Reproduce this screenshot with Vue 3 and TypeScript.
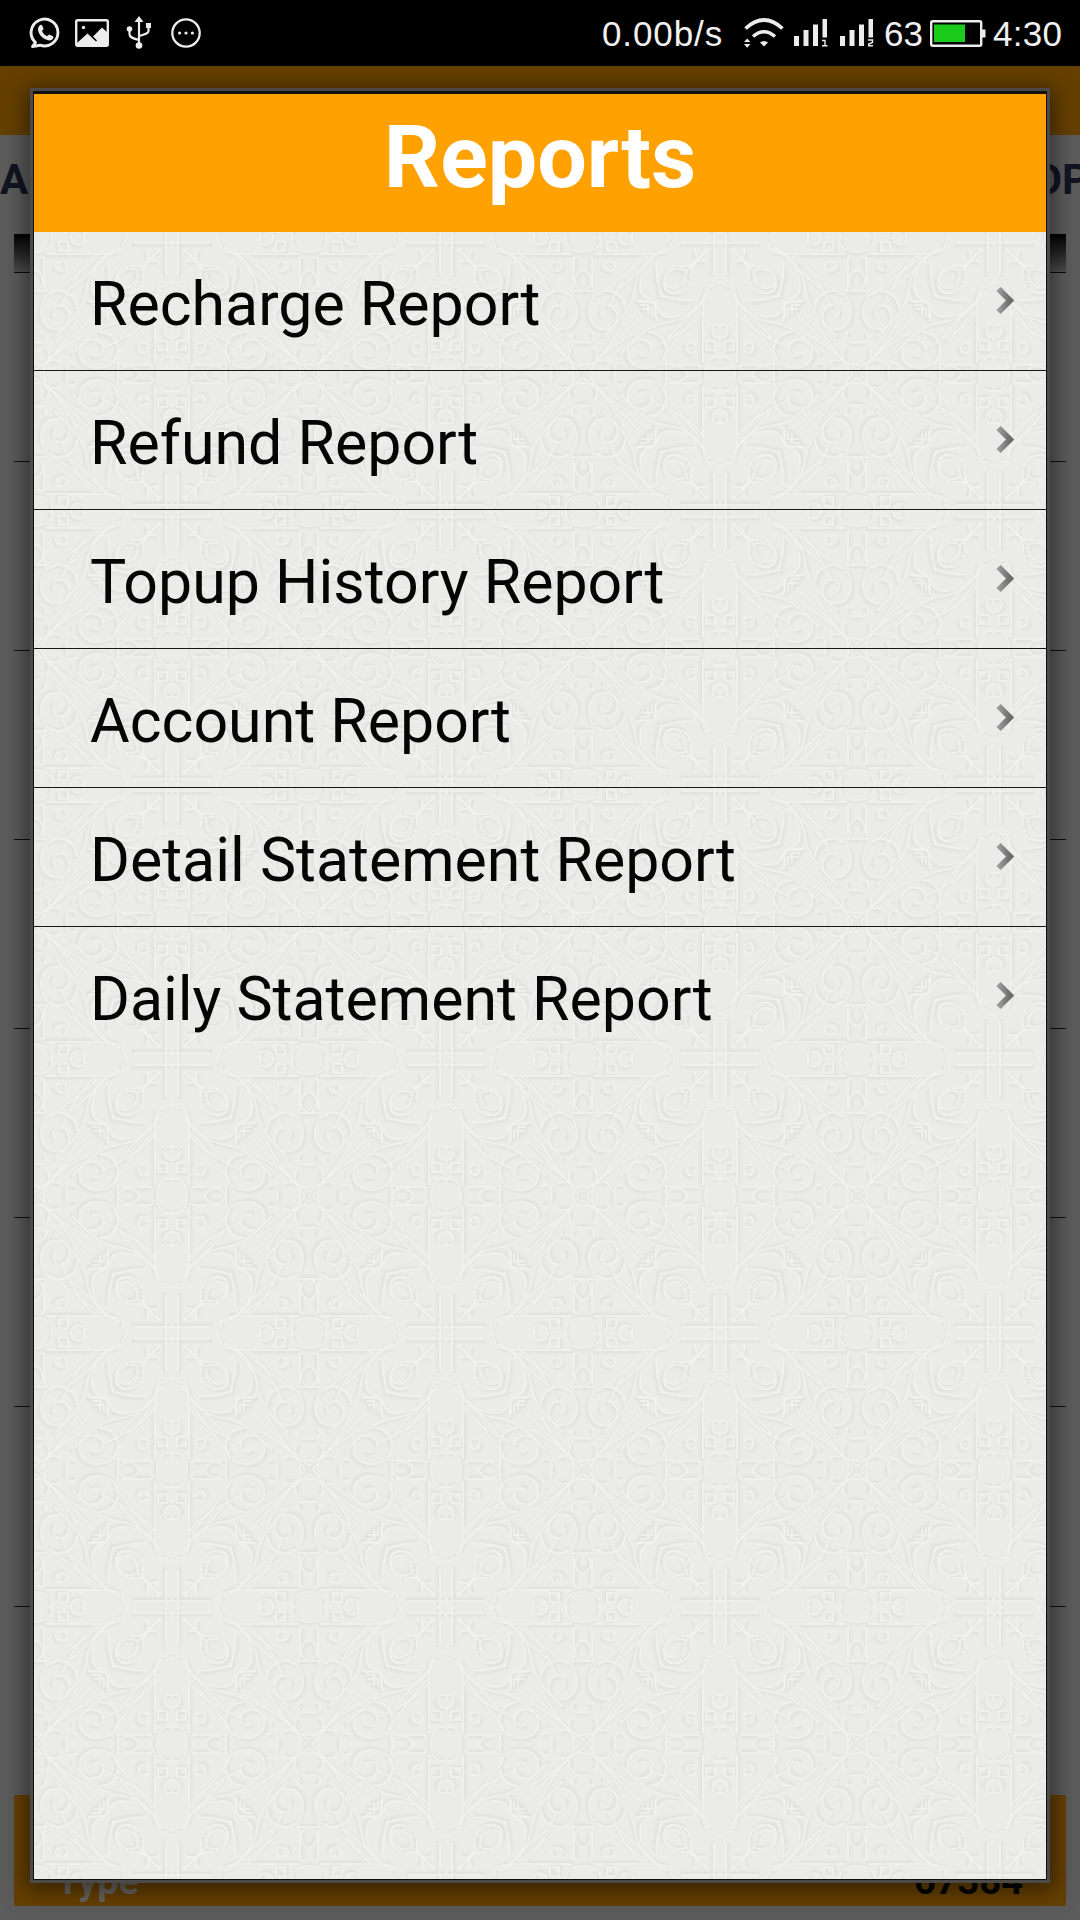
<script setup lang="ts">
const reports: string[] = [
  'Recharge Report',
  'Refund Report',
  'Topup History Report',
  'Account Report',
  'Detail Statement Report',
  'Daily Statement Report',
]
const rowHeights: number[] = [188, 188, 188, 188, 188, 188, 199]
const sims: number[] = [1, 2]
const mirrors: string[] = ['1 1', '-1 1', '1 -1', '-1 -1']
</script>

<template>
  <div class="screen">
    <header class="status">
      <div class="left-icons">
        <svg class="i-wa" width="32" height="32" viewBox="0 0 32 32">
          <path d="M6.500 25.500A13.400 13.400 0 1 1 11 28.200L3.500 29.500Z" fill="none" stroke="#ececec" stroke-width="2.900" stroke-linejoin="round" />
          <path d="M10.600 8.400c1.200-1 2.300-.6 2.800.6l1 2.500c.3.9-.9 1.800-1.400 2.500 1 2.500 2.700 4.200 5.200 5.200.8-.6 1.700-1.900 2.600-1.500l2.800 1.400c1.200.7 1 1.700.3 2.700-1.900 2.500-4.900 1.900-7.600.5-3.700-1.900-6.300-5-7.100-8.300-.5-2.200 0-4.400 1.400-5.600Z" fill="#ececec" />
        </svg>
        <svg class="i-img" width="34" height="28" viewBox="0 0 34 28">
          <rect x="1.200" y="1.200" width="31.600" height="25.600" rx="1.500" fill="none" stroke="#ececec" stroke-width="2.400" />
          <circle cx="8.500" cy="8.500" r="1.700" fill="#ececec" />
          <path d="M2 24 12.500 14.500 21 22.500 22 21.500 18 17.500 27 8.500 33 14V27H2Z" fill="#ececec" />
        </svg>
        <svg class="i-usb" width="26" height="34" viewBox="0 0 26 34">
          <g fill="none" stroke="#ececec" stroke-width="2.200">
            <path d="M13 5V29M3.500 13V18C3.500 22 8 22.500 13 24M22.500 10V15C22.500 18 18 18.500 13 20" />
          </g>
          <path d="M13 0 17.500 6H8.500ZM20 7H25V12H20Z" fill="#ececec" />
          <circle cx="3.500" cy="13" r="2.800" fill="#ececec" />
          <circle cx="13" cy="29.500" r="3.300" fill="#ececec" />
        </svg>
        <svg class="i-dots" width="30" height="30" viewBox="0 0 30 30">
          <circle cx="15" cy="15" r="13.700" fill="none" stroke="#ececec" stroke-width="2.300" />
          <g fill="#ececec">
            <circle cx="8.600" cy="15" r="1.600" /><circle cx="15" cy="15" r="1.600" /><circle cx="21.400" cy="15" r="1.600" />
          </g>
        </svg>
      </div>
      <div class="right-icons">
        <span class="speed">0.00b/s</span>
        <svg class="i-wifi" width="40" height="32" viewBox="0 0 40 32">
          <g fill="none" stroke="#ececec" stroke-width="3.600">
            <path d="M1.500 10.500Q20-6.500 38.500 10.500M9 18.500Q20 9 31 18.500" />
          </g>
          <path d="M16 24.500Q20 21.500 24 24.500L20 28.500ZM0 24 3.200 20.500 6.400 24ZM0 26 3.200 29.800 6.400 26Z" fill="#ececec" />
        </svg>
        <svg v-for="sim in sims" :key="sim" class="i-signal" width="34" height="30" viewBox="0 0 34 30">
          <path d="M0 18H5V28H0ZM9.500 12H14.500V28H9.500ZM19 6.500H24V28H19ZM28.500 1H33V19.500H28.500Z" fill="#ececec" />
          <path v-if="sim === 1" d="M28 22.500H31V27.500M28 27.700H33.500" fill="none" stroke="#ececec" stroke-width="1.400" />
          <path v-else d="M28 22H32.500V24.500L28.700 26V27.700H33" fill="none" stroke="#ececec" stroke-width="1.400" />
        </svg>
        <span class="percent">63</span>
        <svg class="i-bat" width="56" height="28" viewBox="0 0 56 28">
          <rect x="1.200" y="1.200" width="50" height="24.600" rx="1.500" fill="#000" stroke="#ececec" stroke-width="2.400" />
          <rect x="4" y="4.500" width="31" height="17.500" fill="#1bcb1b" />
          <rect x="52" y="9.500" width="3.500" height="8" fill="#ececec" />
        </svg>
        <span class="clock">4:30</span>
      </div>
    </header>

    <main class="backdrop">
      <div class="appbar"></div>
      <div class="tabs"><span>A</span><span class="tab-right">OP</span></div>
      <div class="list">
        <div class="fade"></div>
        <div v-for="(h, i) in rowHeights" :key="i" class="bg-row" :style="{ height: h + 'px' }"></div>
      </div>
      <div class="footer"><span class="type">Type</span><span class="amount">67384</span></div>
    </main>

    <section class="dialog">
      <h1>Reports</h1>
      <div class="content">
        <svg class="damask" width="1012" height="1647">
          <defs>
            <g id="strokes" fill="none">
              <path d="M6 0V38M8 50C15 46 17 60 17 72V126M8 50C4 46 0 45 0 45M17 74C27 91 45 99 70 112" />
              <path d="M11 52C17 68 27 82 55 86C72 89 84 101 100 117" />
              <path d="M14 57C23 74 32 79 49 80C57 80 62 76 62 70M19 72 47 107 58 122M23 68 52 101" />
              <path d="M72 95C55 96 51 112 56 122C64 135 89 134 92 119C95 105 80 98 71 106C64 113 73 123 80 117" />
              <path d="M64 84V68C65 64 76 65 81 65M68 80V72H78M26 63C38 66 49 60 60 59M30 44C31 58 53 61 56 48" />
              <path d="M11 13C22 18 26 32 42 29M13 25C22 22 29 24 29 34" />
              <path d="M0 101C8 101 10 92 5 88H0M5 113H14V104H5ZM0 120C9 119 15 124 15 137" />
              <path d="M24 108C29 103 36 106 33 113C31 119 24 116 25 111M20 128H51M33 137A11 11 0 0 1 54 137M54 126V137" />
              <path d="M95 128C102 123 108 129 105 137M111 125C120 120 129 125 128 137M84 96C104 105 116 118 137 133" />
            </g>
            <g id="quarter">
              <use href="#strokes" /><use href="#strokes" transform="matrix(0 1 1 0 0 0)" />
              <path d="M34 34C44 28 56 36 55 46C48 56 35 50 34 34ZM18 18 34 34M81 81 122 122" fill="none" />
            </g>
            <pattern id="tile" x="1" y="-132" width="274" height="274" patternUnits="userSpaceOnUse">
              <g v-for="m in mirrors" :key="m" :transform="`translate(137 137) scale(${m})`">
                <use href="#quarter" stroke="#e5e5e3" stroke-width="5" stroke-opacity=".6" transform="translate(2 2)" />
                <use href="#quarter" stroke="#e1e1df" stroke-width="1.800" stroke-opacity=".7" transform="translate(1.800 1.800)" />
                <use href="#quarter" stroke="#f1f1f0" stroke-width="2" stroke-opacity=".8" />
              </g>
            </pattern>
          </defs>
          <rect width="1012" height="1647" fill="url(#tile)" />
        </svg>
        <ul>
          <li v-for="name in reports" :key="name">
            <span>{{ name }}</span>
            <svg class="chev" width="20" height="30" viewBox="0 0 20 30">
              <defs>
                <linearGradient id="chevFill" x1="0" y1="0" x2="1" y2="0">
                  <stop offset="0" stop-color="#9c9c9c" /><stop offset="1" stop-color="#6c6c6c" />
                </linearGradient>
              </defs>
              <path d="M2.500 3 14 14.500 2.500 26" fill="none" stroke="url(#chevFill)" stroke-width="6" />
            </svg>
          </li>
        </ul>
      </div>
    </section>
  </div>
</template>

<style>
body { margin: 0; background: #000; }
</style>

<style scoped>
.screen { position: relative; width: 1080px; height: 1920px; overflow: hidden; font-family: Roboto, "Liberation Sans", sans-serif; }
.status { display: flex; justify-content: space-between; height: 66px; background: #000; color: #f0f0f0; font-family: "Liberation Sans", Arial, sans-serif; font-size: 35px; line-height: 68px; }
.left-icons, .right-icons { display: flex; align-items: flex-start; }
.left-icons { padding-left: 29px; }
.i-wa { margin-top: 17px; }
.i-img { margin: 19px 0 0 14px; }
.i-usb { margin: 16px 0 0 17px; }
.i-dots { margin: 18px 0 0 19px; }
.right-icons { width: 478px; }
.speed { width: 142px; letter-spacing: .9px; }
.i-wifi { margin-top: 18px; }
.i-signal { margin: 18px 0 0 10px; }
.i-signal + .i-signal { margin-left: 12px; }
.percent { margin-left: 10px; width: 46px; }
.i-bat { margin-top: 20px; flex: none; }
.clock { margin-left: 7px; letter-spacing: .3px; }

.backdrop { display: flex; flex-direction: column; height: 1854px; background: #5c5c5c; }
.appbar { height: 69px; background: #664000; }
.tabs { display: flex; justify-content: space-between; height: 99px; overflow: hidden; color: #111522; font-size: 42px; font-weight: 700; line-height: 89px; }
.tab-right { margin-right: -9px; }
.list { margin: 0 14px; height: 1561px; }
.fade { height: 38px; background: linear-gradient(#000, #1c1c1c 35%, #505050); border-bottom: 1px solid #0c0c0c; }
.bg-row { border-bottom: 1px solid #111; }
.footer { display: flex; justify-content: space-between; box-sizing: border-box; height: 111px; margin: 0 14px; padding: 61px 43px 0 43px; border-radius: 2px; background: #664000; font-size: 38px; font-weight: 700; line-height: 50px; }
.type { margin-left: -1px; color: #6a655f; }
.amount { color: #050505; }

.dialog { position: absolute; left: 34px; top: 94px; width: 1012px; height: 1785px; box-shadow: 0 0 0 1px #101010, 0 -2px 0 1px #101010, 0 0 0 4px #4c4a48, 0 -2px 0 4px #4c4a48, 0 3px 22px 8px rgba(0, 0, 0, .5); }
h1 { box-sizing: border-box; height: 138px; margin: 0; padding-bottom: 12px; background: #ffa100; color: #fff; font-size: 88px; font-weight: 700; line-height: 126px; text-align: center; }
.content { position: relative; height: 1647px; background: #ebebea; }
.damask { position: absolute; inset: 0; display: block; }
ul { position: relative; margin: 0; padding: 0; list-style: none; }
li { display: flex; justify-content: space-between; box-sizing: border-box; height: 139px; padding: 0 30px 0 56px; border-bottom: 1px solid #181818; color: #050505; font-size: 60.850px; line-height: 146px; white-space: nowrap; }
li:last-child { border-bottom: 0; }
.chev { margin-top: 54px; }
</style>
